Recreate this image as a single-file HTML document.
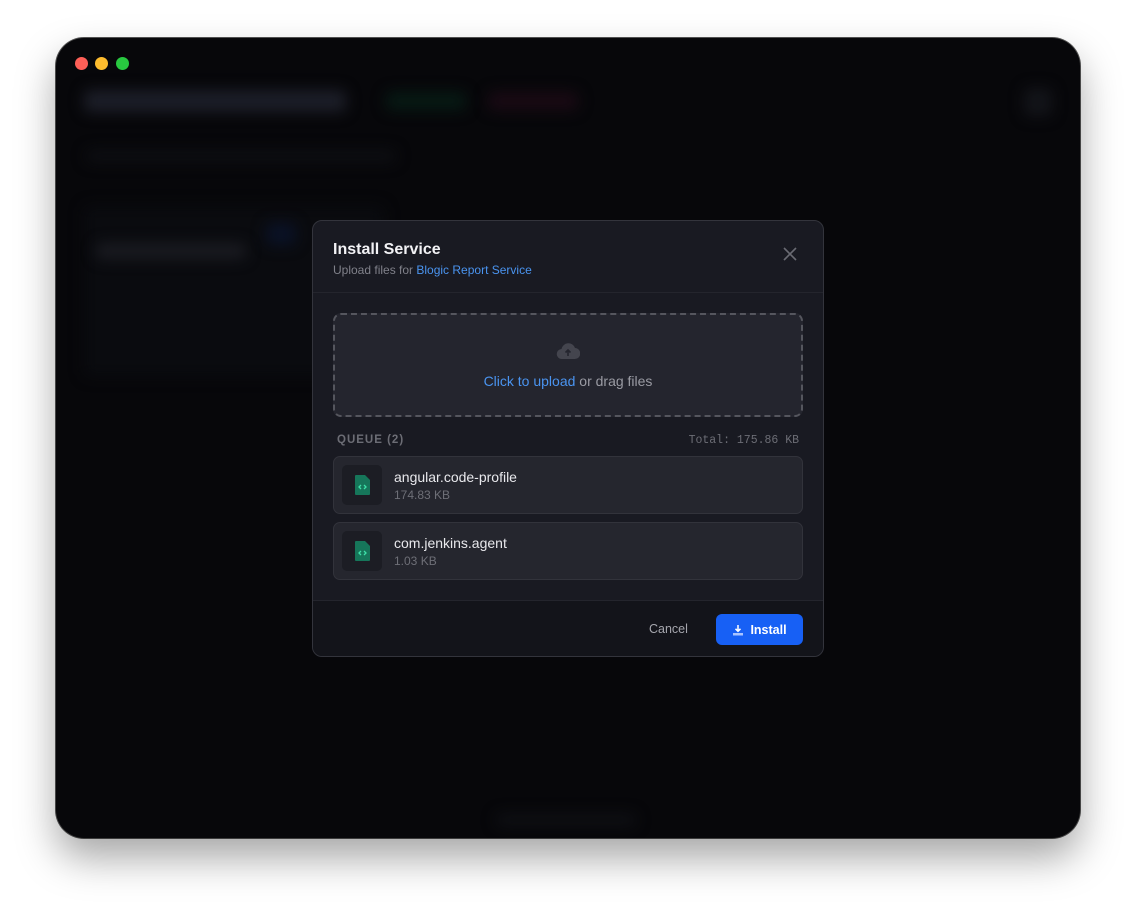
<!DOCTYPE html>
<html><head><meta charset="utf-8"><style>
*{box-sizing:border-box;margin:0;padding:0}
body{width:1136px;height:912px;background:#fff;font-family:"Liberation Sans",sans-serif;position:relative;overflow:hidden}
.win{position:absolute;left:56px;top:38px;width:1024px;height:800px;border-radius:28px;background:#07070a;box-shadow:0 20px 40px rgba(0,0,0,.35),0 0 0 1px #555;overflow:hidden}
.dot{position:absolute;top:19px;width:13px;height:13px;border-radius:50%}
.bl{position:absolute;filter:blur(7px);border-radius:6px}
.modal{position:absolute;left:312px;top:220px;width:512px;height:437px;background:#191a22;border:1px solid #33343c;border-radius:10px;overflow:hidden}
.hd{height:72px;border-bottom:1px solid #24252d;padding:20px 20px}
.t{color:#f2f2f5;font-size:16px;font-weight:bold}
.s{color:#80818a;font-size:12px;margin-top:4px}
.b{color:#4a94f0}
.x{position:absolute;right:26px;top:26px}
.dz{position:absolute;left:20px;top:92px;width:470px;height:104px;border:2px dashed #55565e;border-radius:8px;background:#24252e;text-align:center}
.ql{position:absolute;left:24px;top:213px;font-size:11.5px;font-weight:bold;letter-spacing:1px;color:#6c6d75}
.qt{position:absolute;right:24px;top:213px;font-size:11.5px;font-family:"Liberation Mono",monospace;color:#6c6d75}
.it{position:absolute;left:20px;width:470px;height:58px;background:#25262e;border:1px solid #32333b;border-radius:7px}
.ic{position:absolute;left:8px;top:8px;width:40px;height:40px;background:#1c1d24;border-radius:5px;display:flex;align-items:center;justify-content:center}
.n{position:absolute;left:60px;top:12px;color:#e8e8ec;font-size:14px}
.z{position:absolute;left:60px;top:31px;color:#6e6f77;font-size:12px}
.ft{position:absolute;left:0;top:379px;width:100%;height:58px;border-top:1px solid #24252d;background:#13141a}
.cn{position:absolute;left:336px;top:21px;color:#a5a6ad;font-size:12.5px}
.btn{position:absolute;left:403px;top:13px;width:87px;height:31px;background:#1760f5;border-radius:6px;color:#fff;font-weight:bold;font-size:12.5px;display:flex;align-items:center;justify-content:center;gap:6px}
</style></head><body>
<div class="win">
<div class="dot" style="left:19px;background:#fe5f57"></div>
<div class="dot" style="left:39px;background:#febc2e"></div>
<div class="dot" style="left:60px;background:#28c840"></div>
<div class="bl" style="left:28px;top:52px;width:262px;height:22px;background:#1c1e28"></div>
<div class="bl" style="left:330px;top:54px;width:80px;height:18px;background:#071a14"></div>
<div class="bl" style="left:432px;top:54px;width:90px;height:18px;background:#1a0a14"></div>
<div class="bl" style="left:968px;top:50px;width:28px;height:28px;background:#131419"></div>
<div class="bl" style="left:30px;top:112px;width:310px;height:12px;background:#0e0f13"></div>
<div class="bl" style="left:28px;top:168px;width:300px;height:170px;background:#0a0b0f"></div>
<div class="bl" style="left:40px;top:205px;width:150px;height:16px;background:#1a1b21"></div>
<div class="bl" style="left:210px;top:185px;width:30px;height:22px;background:#0a1226"></div>
<div class="bl" style="left:440px;top:776px;width:140px;height:12px;background:#0f1014"></div>
</div>
<div class="modal">
<div class="hd"><div class="t">Install Service</div><div class="s">Upload files for <span class="b">Blogic Report Service</span></div></div>
<svg class="x" width="14" height="14" viewBox="0 0 14 14"><path d="M1 1L13 13M13 1L1 13" stroke="#6a6b73" stroke-width="1.6"/></svg>
<div class="dz">
<svg style="margin-top:26px" width="24" height="20" viewBox="0 0 24 20"><path d="M6 18a5 5 0 0 1-.5-10A7 7 0 0 1 19 7a5.5 5.5 0 0 1-.5 11z" fill="#44454e"/><path d="M12 15V9M9.5 11.5L12 9l2.5 2.5" stroke="#24252e" stroke-width="1.6" fill="none"/></svg>
<div style="font-size:14px;color:#9a9ba3;margin-top:7px"><span class="b">Click to upload</span> or drag files</div>
</div>
<div class="ql">QUEUE (2)</div><div class="qt">Total: 175.86 KB</div>
<div class="it" style="top:235px"><div class="ic"><svg width="15" height="20" viewBox="0 0 15 20"><path d="M1 0h9l5 5v14a1 1 0 0 1-1 1H1a1 1 0 0 1-1-1V1a1 1 0 0 1 1-1z" fill="#16765a"/><path d="M6 10l-2 2 2 2M9 10l2 2-2 2" stroke="#3ee0a8" stroke-width="1.3" fill="none"/></svg></div><div class="n">angular.code-profile</div><div class="z">174.83 KB</div></div>
<div class="it" style="top:301px"><div class="ic"><svg width="15" height="20" viewBox="0 0 15 20"><path d="M1 0h9l5 5v14a1 1 0 0 1-1 1H1a1 1 0 0 1-1-1V1a1 1 0 0 1 1-1z" fill="#16765a"/><path d="M6 10l-2 2 2 2M9 10l2 2-2 2" stroke="#3ee0a8" stroke-width="1.3" fill="none"/></svg></div><div class="n">com.jenkins.agent</div><div class="z">1.03 KB</div></div>
<div class="ft"><div class="cn">Cancel</div><div class="btn"><svg width="12" height="12" viewBox="0 0 12 12"><path d="M6 1v6M3.5 4.8L6 7.3l2.5-2.5" stroke="#fff" stroke-width="1.5" fill="none"/><rect x="1" y="9" width="10" height="2.5" fill="#a9c4ff"/></svg>Install</div></div>
</div>
</body></html>
